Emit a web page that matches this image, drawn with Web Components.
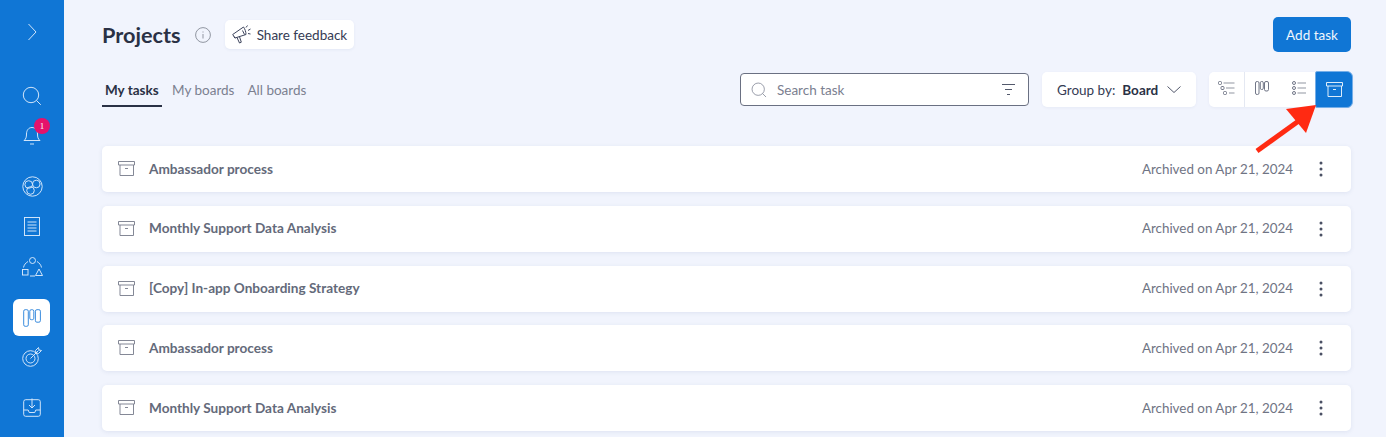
<!DOCTYPE html>
<html><head><meta charset="utf-8"><title>Projects</title>
<style>
html,body{margin:0;padding:0;height:437px;overflow:hidden;background:#f1f4fd;font-family:Lato,"Liberation Sans",sans-serif}
app-shell{width:1386px;height:437px}
</style></head><body>
<app-shell></app-shell>
<script>
function svg(w,h,vb,inner,extra=''){return `<svg width="${w}" height="${h}" viewBox="${vb}" fill="none" stroke="currentColor" stroke-width=".95" ${extra}>${inner}</svg>`}
const box=`<path d="M.5 .5h16v3.500H.5zM2 4v10.500h13.500V4M7 7.500h3"/>`;
const icons={
 chevron:svg(10,18,'0 0 10 18','<path d="M1.500 1l7.500 8-7.500 8"/>'),
 search:svg(20,20,'0 0 20 20','<circle cx="9" cy="9" r="7.700"/><path d="M14.500 14.500l4.300 4.300"/>'),
 bell:svg(18,20,'0 0 18 20','<path d="M1 15.500c2-1.500 2.500-3.500 2.500-6.500 0-3.500 2-6.500 5.500-6.500s5.500 3 5.500 6.500c0 3 .5 5 2.500 6.500zM7 19h4"/>'),
 orbit:svg(21,21,'0 0 21 21','<circle cx="10.500" cy="10.500" r="9.700"/><circle cx="6.700" cy="8.500" r="3.800"/><circle cx="14.300" cy="8" r="3.800"/><circle cx="8.500" cy="14.500" r="3.800"/>'),
 doc:svg(16,19,'0 0 16 19','<rect x=".5" y=".5" width="15" height="18"/><path d="M3.500 5h9M3.500 8h9M3.500 11h9M3.500 14h9"/>'),
 shapes:svg(21,20,'0 0 21 20','<circle cx="10.500" cy="3.500" r="3"/><path d="M6 4.500C3.500 6 2 8 1.500 10.500M15 4.500c2.500 1.500 4 3.500 4.500 6M8 19h5"/><rect x=".5" y="12.500" width="5.500" height="5.500"/><path d="M17 12l3.500 6.500h-7z"/>'),
 board:svg(18,18,'0 0 18 18','<rect x=".7" y=".7" width="4.600" height="16.600" rx="1.500"/><rect x="6.800" y=".7" width="4" height="10" rx="1.500"/><rect x="12.400" y=".7" width="5" height="12.500" rx="1.500"/>'),
 target:svg(20,20,'0 0 20 20','<circle cx="8.500" cy="11.500" r="7.800"/><circle cx="8.500" cy="11.500" r="4.500"/><path d="M8.500 11.500l8-8M13.500 3.500l3-3 .5 2.500 2.500.5-3 3-2.500-.5z"/>'),
 inbox:svg(18,19,'0 0 18 19','<rect x=".7" y="1.700" width="16.600" height="16.600" rx="2"/><path d="M.7 12h4.500l1 2.500h5.600l1-2.500h4.500M9 .5v9M6 7l3 3 3-3"/>'),
 info:svg(16,16,'0 0 16 16','<circle cx="8" cy="8" r="7.400"/><path d="M8 7v4.500M8 4.500v1"/>'),
 mega:svg(19,19,'0 0 19 19','<path d="M.7 9.500L11.500 2c1.500 2 2.500 5 2.500 7.500L3 13zM2 11.500l1 1.700M5 12.500l2.500 5.500 1.800-.8-1.800-5.500M10.500 5.500l2 4M14 2.500l1.500-2M16 5.500l2.500-1.500M16 8.500l2.500.5"/>'),
 filter:svg(13,11,'0 0 13 11','<path d="M0 .5h13M3 5.500h7M5 10.500h3"/>'),
 caret:svg(14,7,'0 0 14 7','<path d="M.5 .5L7 6.500l6.500-6"/>'),
 tree:svg(17,15,'0 0 17 15','<rect x=".5" y=".5" width="3" height="3" rx="1"/><rect x="3" y="5.500" width="3" height="3" rx="1"/><rect x="5.500" y="10.500" width="3" height="3" rx="1"/><path d="M5.500 2h11M8 7h8.500M11 12h5.500" stroke="#8b909c"/>'),
 board2:svg(14,14,'0 0 14 14','<rect x=".5" y=".5" width="3.500" height="13" rx="1.500"/><rect x="5.300" y=".5" width="3" height="8" rx="1.300"/><rect x="9.500" y=".5" width="4" height="9.500" rx="1.500"/>'),
 list:svg(14,14,'0 0 14 14','<rect x=".5" y=".5" width="3" height="3" rx="1.500"/><rect x=".5" y="5.500" width="3" height="3" rx="1.500"/><rect x=".5" y="10.500" width="3" height="3" rx="1.500"/><path d="M5.500 2H14M5.500 7H14M5.500 12H14" stroke="#8b909c"/>'),
 archive:svg(17,15,'0 0 17 15',box),
 kebab:`<svg width="4" height="16" viewBox="0 0 4 16" fill="currentColor"><circle cx="2" cy="2" r="1.500"/><circle cx="2" cy="8" r="1.500"/><circle cx="2" cy="14" r="1.500"/></svg>`,
};
function define(name,css,html,init){
 customElements.define(name,class extends HTMLElement{
  constructor(){super();this.attachShadow({mode:'open'}).innerHTML=`<style>${css}</style>${typeof html==='function'?html(this):html}`;}
  connectedCallback(){if(init)init(this)}
 });
}
define('side-item',`
:host{display:flex;width:36px;height:36px;align-items:center;justify-content:center;color:#dbeafb;border-radius:6px;position:relative}
:host([active]){background:#fff;color:#2f86db;width:37px;height:37px;box-sizing:border-box;padding-left:1px;margin-right:1px}
svg{display:block}
.b{position:absolute;left:20px;top:1px;width:16px;height:16px;border-radius:50%;background:#e5126b;color:#fff;font:9px/16px "Liberation Serif",serif;text-align:center}
`,'<span id="i" style="display:flex"></span><span class="b" id="b" hidden></span>',el=>{
 const s=el.shadowRoot;s.getElementById('i').innerHTML=icons[el.getAttribute('icon')];
 if(el.hasAttribute('badge')){const b=s.getElementById('b');b.hidden=false;b.textContent=el.getAttribute('badge')}
 else s.getElementById('b').remove();
});
define('app-sidebar',`
:host{display:flex;flex-direction:column;align-items:center;width:64px;height:437px;background:#1076d5;flex:none;box-sizing:border-box;padding-top:14px}
`,`<side-item icon="chevron"></side-item>
<side-item icon="search" style="margin-top:28px"></side-item>
<side-item icon="bell" badge="1" style="margin-top:3px"></side-item>
<side-item icon="orbit" style="margin-top:15px"></side-item>
<side-item icon="doc" style="margin-top:4px"></side-item>
<side-item icon="shapes" style="margin-top:5px"></side-item>
<side-item icon="board" active style="margin-top:14px"></side-item>
<side-item icon="target" style="margin-top:3px"></side-item>
<side-item icon="inbox" style="margin-top:14px"></side-item>`);
define('page-header',`
:host{display:flex;align-items:center;height:35px}
h1{margin:0;font:700 21.7px/26px Lato,sans-serif;color:#2a3145}
.i{display:flex;margin-left:14px;color:#8b909c}
.fb{display:flex;align-items:center;height:29px;margin-left:14px;padding:0 7px;background:#fff;border-radius:5px;font:13.5px/18px Lato,sans-serif;color:#343b54;gap:6px;box-shadow:0 1px 3px rgba(60,80,140,.07)}
.fb svg{display:block}
.add{margin-left:auto;height:35px;width:78px;background:#1076d5;color:#f1f7fd;border:0;border-radius:5px;font:13.5px Lato,sans-serif;padding:0}
`,`<h1>Projects</h1><span class="i">${icons.info}</span><span class="fb">${icons.mega}<span>Share feedback</span></span><button class="add">Add task</button>`);
define('tab-bar',`
:host{display:flex;height:36px;font:13.5px/18px Lato,sans-serif;color:#7b8090;white-space:nowrap}
span{display:block;padding-top:9px;box-sizing:border-box;height:35px}
.on{color:#2a3145;font-weight:700;border-bottom:2px solid #2a3145;padding-left:3px;width:60px}
.b1{margin-left:10px}.b2{margin-left:13px}
`,`<span class="on">My tasks</span><span class="b1">My boards</span><span class="b2">All boards</span>`);
define('search-box',`
:host{display:flex;align-items:center;width:289px;height:33px;box-sizing:border-box;border:1px solid #6a7082;border-radius:4px;background:#fff;padding:0 13px 0 10px;font:13.5px Lato,sans-serif;color:#7b8090}
.s{display:flex;color:#7b8090}.s svg{width:16px;height:16px}
.t{margin-left:10px;flex:1;position:relative;top:.6px}
.f{display:flex;color:#4a5064}
`,`<span class="s">${icons.search}</span><span class="t">Search task</span><span class="f">${icons.filter}</span>`);
define('group-select',`
:host{display:flex;align-items:center;width:154px;height:35px;box-sizing:border-box;background:#fff;border-radius:5px;padding:0 15px 0 15px;font:13.5px Lato,sans-serif;color:#343b54;margin-left:13px;box-shadow:0 1px 3px rgba(60,80,140,.06)}
b{margin-left:7px;font-weight:700;flex:1;color:#2a3145}
span{display:flex;color:#4a5064}
`,`Group by:<b>Board</b><span>${icons.caret}</span>`);
define('view-toggle',`
:host{display:flex;height:35px;margin-left:13px;background:#fff;border-radius:5px;color:#6a7082;box-shadow:0 1px 3px rgba(60,80,140,.06);width:144px;box-sizing:border-box;position:relative}
.c{width:36px;box-sizing:border-box;display:flex;align-items:center;justify-content:center;border-right:1px solid #e4e8f2;padding-bottom:3px}
.c:nth-child(3){border:0}
.c:nth-child(1){padding-right:2px}.c:nth-child(3){padding-right:2px}.c:nth-child(2){padding-right:1px}
.a{position:absolute;right:0;top:-1px;width:38px;height:37px;box-sizing:border-box;background:#1076d5;border:1px solid #75aee8;border-radius:2px 6px 6px 2px;color:#e8f2fc;display:flex;align-items:center;justify-content:center}
`,`<span class="c">${icons.tree}</span><span class="c">${icons.board2}</span><span class="c">${icons.list}</span><span class="a">${icons.archive}</span>`);
define('task-row',`
:host{display:flex;align-items:center;height:46px;box-sizing:border-box;padding:0 28px 1px 16px;background:#fff;border-radius:5px;box-shadow:0 1px 4px rgba(60,80,140,.1);font:13.6px Lato,sans-serif;color:#6f7484;flex:none}
.ic{display:flex;color:#7d8290;margin-right:14px}
.n{flex:1;font-weight:700;color:#646a7a}
.d{font-size:13.4px}
.m{display:flex;margin-left:26px;color:#4a5064;position:relative;top:.5px}
`,el=>`<span class="ic">${icons.archive}</span><span class="n"><slot></slot></span><span class="d">Archived on Apr 21, 2024</span><span class="m">${icons.kebab}</span>`);
define('app-shell',`
:host{display:flex;overflow:hidden;position:relative}
main{flex:1;padding:17px 35px 0 38px;min-width:0;display:flex;flex-direction:column}
.tools{display:flex;align-items:flex-start;margin-top:20px;height:74px}
.sp{flex:1;display:flex;align-items:flex-start;justify-content:flex-end;margin-right:-2px}
.rows{display:flex;flex-direction:column;gap:13.8px}
search-box{margin-top:1px}
.arrow{position:absolute;left:1250px;top:96px;pointer-events:none}
`,`<app-sidebar></app-sidebar><main>
<page-header></page-header>
<div class="tools"><tab-bar></tab-bar><div class="sp"><search-box></search-box><group-select></group-select><view-toggle></view-toggle></div></div>
<div class="rows">
<task-row>Ambassador process</task-row>
<task-row>Monthly Support Data Analysis</task-row>
<task-row>[Copy] In-app Onboarding Strategy</task-row>
<task-row>Ambassador process</task-row>
<task-row>Monthly Support Data Analysis</task-row>
</div></main>
<svg class="arrow" width="72" height="60" viewBox="0 0 72 60"><path d="M7 55L50 24" stroke="#ff2a12" stroke-width="5"/><path d="M66 9L36 13L56 37Z" fill="#ff2a12"/></svg>`);
</script>
</body></html>
